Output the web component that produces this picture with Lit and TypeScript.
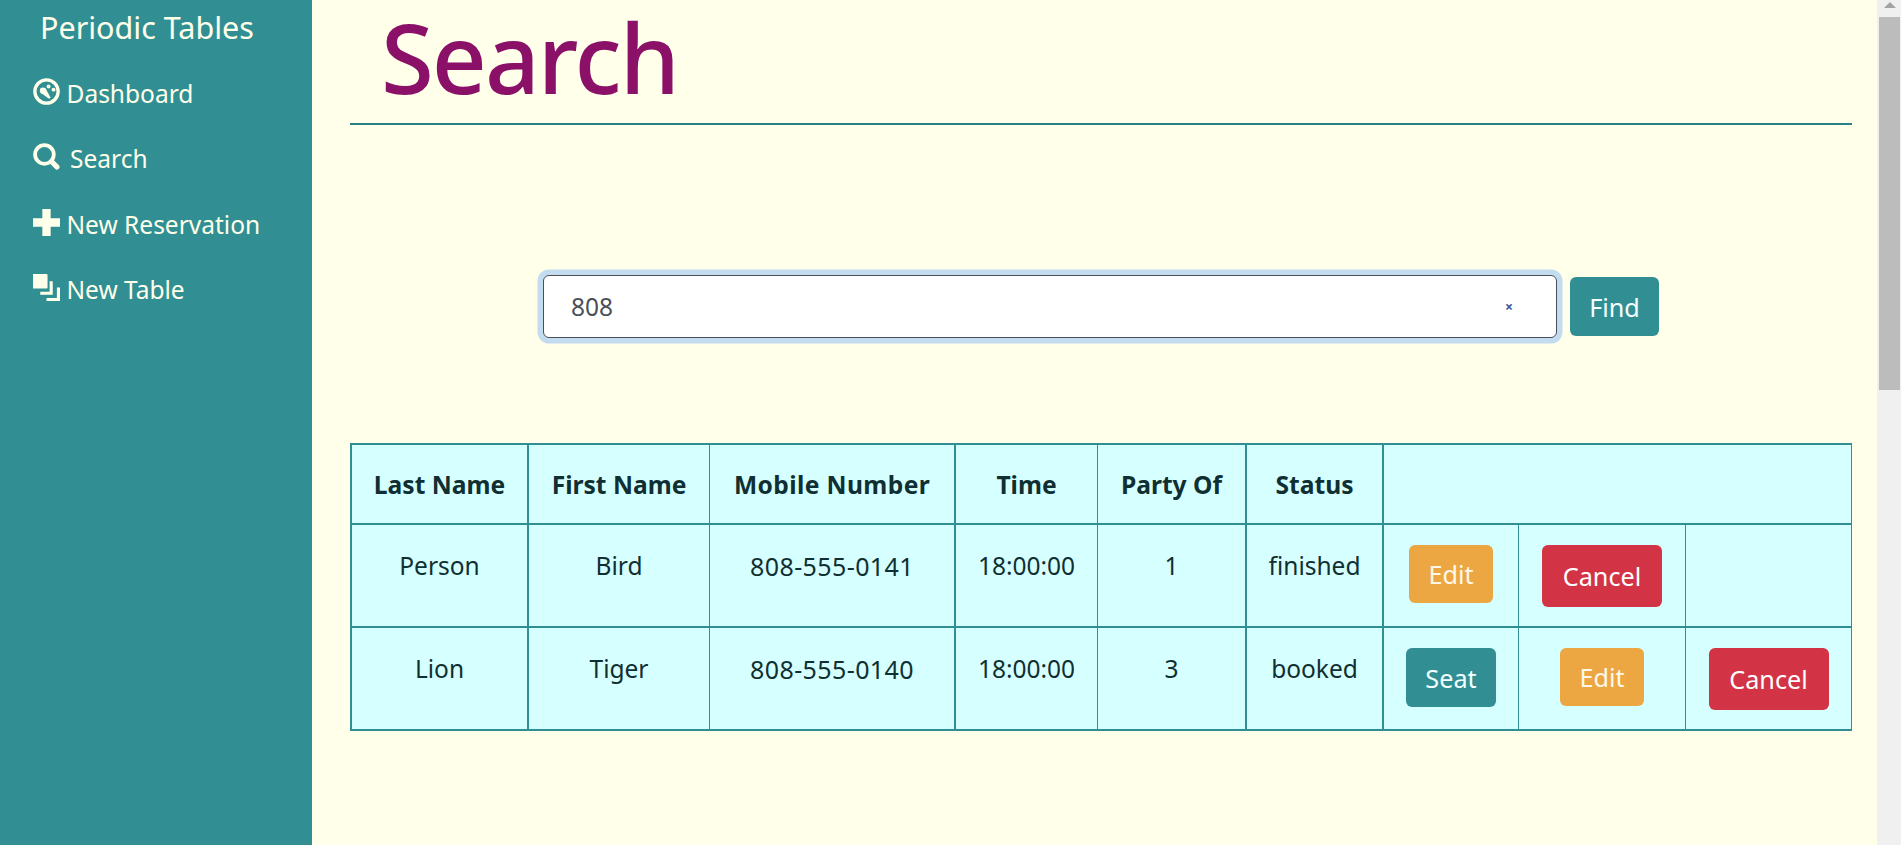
import { LitElement, html, css, svg, unsafeCSS } from "lit";
import { customElement } from "lit/decorators.js";

const FONT = unsafeCSS(`"Noto Sans", "Open Sans", sans-serif`);

const dashIcon = svg`<svg class="ico" viewBox="0 0 26 26"><circle cx="13" cy="13" r="11.2" fill="none" stroke="currentColor" stroke-width="3.2"/><circle cx="9.6" cy="12.2" r="3" fill="currentColor"/><path fill="currentColor" d="M7.4 14.2l4.6-4.4 5 9.2-1.6 1z"/><circle cx="15" cy="8.2" r="1.9" fill="currentColor"/><circle cx="19.8" cy="11.2" r="1.9" fill="currentColor"/></svg>`;
const searchIcon = svg`<svg class="ico" viewBox="0 0 26 26"><circle cx="11" cy="11" r="9" fill="none" stroke="currentColor" stroke-width="3.6"/><path d="M17.8 17.8l5.2 5.2" stroke="currentColor" stroke-width="5" stroke-linecap="round"/></svg>`;
const plusIcon = svg`<svg class="ico" viewBox="0 0 26 26"><path fill="currentColor" d="M9 0h8v9h9v8h-9v9H9v-9H0V9h9z"/></svg>`;
const dupIcon = svg`<svg class="ico" viewBox="0 0 26 26"><path fill="currentColor" d="M0 0h13a1 1 0 0 1 1 1v12a1 1 0 0 1-1 1H0zM16 7h3v13H7v-3h9zM23 13h3v13H13v-3h10z"/></svg>`;

@customElement("app-root")
export class AppRoot extends LitElement {
  static styles = css`
    :host {
      display: flex;
      height: 100vh;
      overflow: hidden;
      font-family: ${FONT};
      background: #ffffea;
      color: #102f33;
    }
    .side {
      width: 312px;
      flex: none;
      background: #318f94;
      color: #ffffea;
      box-sizing: border-box;
      padding-left: 32px;
    }
    .brand {
      font-size: 30.5px;
      line-height: 40px;
      padding: 7px 0 0 8px;
      margin: 0 0 26px;
      font-weight: 400;
      white-space: nowrap;
    }
    nav { display: flex; flex-direction: column; gap: 25.5px; }
    .item { display: flex; align-items: center; height: 40px; font-size: 24.5px; gap: 6.5px; white-space: nowrap; padding-left: 1px; }
    .item.s { gap: 10px; }
    .ico { width: 27px; height: 27px; flex: none; margin-top: -4px; }
    main {
      flex: 1;
      min-width: 0;
      box-sizing: border-box;
      padding: 0 25px 0 38px;
    }
    h1 {
      box-sizing: border-box;
      margin: 0;
      font-size: 96px;
      font-weight: 500;
      line-height: 113px;
      color: #8b1068;
      padding-left: 31px;
      border-bottom: 2px solid #2a8288;
      height: 125px;
      letter-spacing: -2px;
    }
    .find {
      display: flex;
      align-items: center;
      margin: 150px 0 0 193px;
      gap: 13px;
    }
    .box {
      box-sizing: border-box;
      width: 1014px;
      height: 63px;
      background: #fff;
      border: 1px solid #4a5058;
      border-radius: 6px;
      box-shadow: 0 0 0 5.5px #c3dcf0;
      display: flex;
      align-items: center;
      justify-content: space-between;
      padding: 0 43px 0 27px;
      font-size: 24.5px;
      color: #495057;
    }
    .x { font-size: 14px; color: #3c56a0; font-weight: 700; }
    .btn {
      box-sizing: border-box;
      display: inline-flex;
      align-items: center;
      justify-content: center;
      border: 0;
      border-radius: 6px;
      color: #fff;
      font: inherit;
      font-size: 25.2px;
      padding: 0;
    }
    .find .btn { width: 89px; height: 59px; margin-top: -1px; padding: 2px 0 0; }
    .teal { background: #318f94; color: #f4ffff; }
    .amber { background: #eca743; color: #fff8e8; }
    .red { background: #d33445; }
    .edit { width: 84px; height: 58px; }
    .cancel { width: 120px; height: 62px; }
    .seat { width: 90px; height: 59px; }
    table {
      table-layout: fixed;
      border-collapse: separate;
      border-spacing: 0;
      width: 1502px;
      margin-top: 105px;
      background: #d6ffff;
      border-top: 2px solid #318f94;
      border-left: 2px solid #318f94;
      font-size: 24.5px;
    }
    th, td {
      box-sizing: border-box;
      text-align: center;
      padding: 0;
      border-right: 1px solid #318f94;
      border-bottom: 2px solid #318f94;
    }
    th { height: 80px; font-weight: 700; font-size: 24.6px; white-space: nowrap; }
    th.w { letter-spacing: 0.4px; }
    td { height: 103px; vertical-align: top; }
    .txt { display: block; padding-top: 23px; line-height: 36px; }
    .txt.p { font-size: 25px; letter-spacing: 0.4px; }
    .thick { border-right-width: 2px; }
    td.b { vertical-align: top; padding-top: 20px; }
    .bar {
      width: 24px;
      flex: none;
      box-sizing: border-box;
      background: #f0f0f0;
      display: flex;
      flex-direction: column;
      align-items: center;
      padding: 2px 1px 0 2px;
    }
    .arrow { width: 12px; height: 6px; fill: #a3a3a3; flex: none; }
    .thumb { width: 21px; height: 373px; margin-top: 9px; background: #bcbcbc; flex: none; }
  `;

  private row(l: string, f: string, m: string, t: string, p: string, s: string, a: unknown, b: unknown, c: unknown) {
    return html`<tr>
      <td class="thick"><span class="txt">${l}</span></td>
      <td><span class="txt">${f}</span></td>
      <td class="thick"><span class="txt p">${m}</span></td>
      <td><span class="txt">${t}</span></td>
      <td class="thick"><span class="txt">${p}</span></td>
      <td class="thick"><span class="txt">${s}</span></td>
      <td class="b">${a}</td>
      <td class="b">${b}</td>
      <td class="b">${c}</td>
    </tr>`;
  }

  render() {
    const edit = html`<button class="btn amber edit">Edit</button>`;
    const cancel = html`<button class="btn red cancel">Cancel</button>`;
    const seat = html`<button class="btn teal seat">Seat</button>`;
    return html`
      <aside class="side">
        <div class="brand">Periodic Tables</div>
        <nav>
          <div class="item">${dashIcon}Dashboard</div>
          <div class="item s">${searchIcon}Search</div>
          <div class="item">${plusIcon}New Reservation</div>
          <div class="item">${dupIcon}New Table</div>
        </nav>
      </aside>
      <main>
        <h1>Search</h1>
        <div class="find">
          <div class="box"><span>808</span><span class="x">×</span></div>
          <button class="btn teal">Find</button>
        </div>
        <table>
          <colgroup>
            <col style="width:177px" /><col style="width:181px" /><col style="width:246px" />
            <col style="width:142px" /><col style="width:149px" /><col style="width:137px" />
            <col style="width:135px" /><col style="width:167px" /><col style="width:166px" />
          </colgroup>
          <thead>
            <tr>
              <th class="thick">Last Name</th><th>First Name</th><th class="thick w">Mobile Number</th>
              <th>Time</th><th class="thick">Party Of</th><th class="thick">Status</th>
              <th colspan="3"></th>
            </tr>
          </thead>
          <tbody>
            ${this.row("Person", "Bird", "808-555-0141", "18:00:00", "1", "finished", edit, cancel, "")}
            ${this.row("Lion", "Tiger", "808-555-0140", "18:00:00", "3", "booked", seat, edit, cancel)}
          </tbody>
        </table>
      </main>
      <div class="bar">
        <svg class="arrow" viewBox="0 0 12 6"><path d="M6 0l6 6H0z" /></svg>
        <div class="thumb"></div>
      </div>
    `;
  }
}
